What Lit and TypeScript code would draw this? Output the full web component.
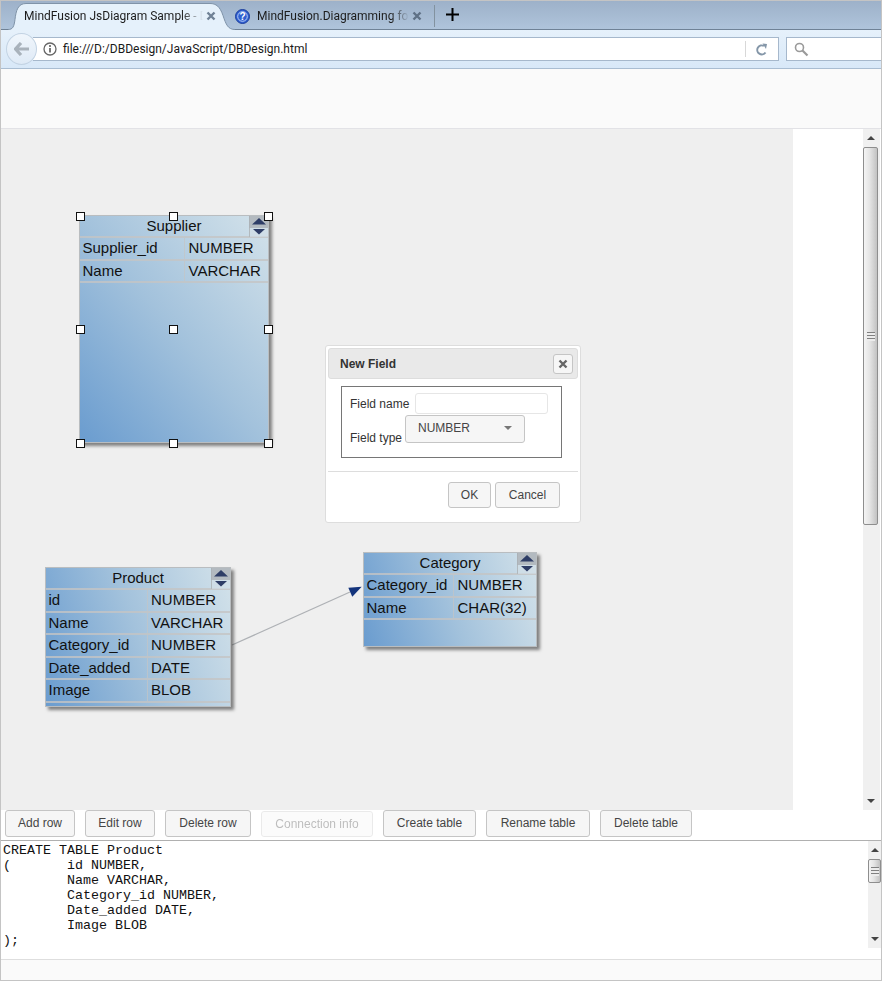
import {LitElement, html, css, svg} from 'lit';
import {customElement, property} from 'lit/decorators.js';

@customElement('db-table')
class DbTable extends LitElement {
  static styles = css`
    :host {
      position: absolute;
      display: block;
      box-sizing: border-box;
      border: 1px solid #b9bdc0;
      background: linear-gradient(to top right, #6a9ccf 0%, #a3c2dc 50%, #d3e2ea 100%);
      box-shadow: 3px 3px 3px rgba(40, 40, 40, 0.55);
      font: 15px/1 "Liberation Sans", Arial, sans-serif;
      color: #111;
    }
    :host([wide]) {
      background: linear-gradient(72deg, #6a9ccf 0%, #a3c2dc 50%, #d3e2ea 100%);
    }
    .head {
      position: relative;
      height: 20px;
      line-height: 20px;
      text-align: center;
      border-bottom: 2px solid rgba(196, 196, 196, 0.8);
    }
    .toggle {
      position: absolute;
      right: 0;
      top: 0;
      width: 19px;
      height: 21px;
      background: linear-gradient(#b3bac0 0 55%, rgba(210, 222, 230, 0.6) 55%);
      border-left: 1px solid rgba(170, 176, 180, 0.8);
      box-sizing: border-box;
    }
    .toggle svg {
      display: block;
    }
    .row {
      display: grid;
      height: 22.5px;
      line-height: 20.5px;
      box-sizing: border-box;
      border-bottom: 2px solid rgba(196, 196, 196, 0.8);
    }
    .row span {
      padding-left: 2.5px;
      white-space: nowrap;
    }
    .row span + span {
      padding-left: 3.5px;
      border-left: 1.5px solid rgba(196, 196, 196, 0.7);
    }
  `;

  @property() name = '';
  @property({type: Number}) split = 100;
  @property({attribute: false}) rows: string[][] = [];

  render() {
    return html`
      <div class="head">
        ${this.name}
        <div class="toggle">
          <svg width="18" height="21" viewBox="0 0 18 21">
            <path d="M2 8.5L9 2l7 6.5z" fill="#2e3d66" />
            <path d="M3 13h12l-6 5.5z" fill="#2e3d66" />
          </svg>
        </div>
      </div>
      ${this.rows.map(
        (r) => html`<div class="row" style="grid-template-columns:${this.split}px 1fr">
          <span>${r[0]}</span><span>${r[1]}</span>
        </div>`
      )}
    `;
  }
}

@customElement('app-root')
class AppRoot extends LitElement {
  static styles = css`
    :host {
      display: flex;
      flex-direction: column;
      width: 882px;
      height: 981px;
      box-sizing: border-box;
      overflow: hidden;
      background: #fff;
      border-left: 1px solid #c4c4c4;
      border-right: 1px solid #c4c4c4;
      border-top: 1px solid #c4c4c4;
      font-family: "Liberation Sans", Arial, sans-serif;
      font-size: 12px;
      color: #333;
    }
    /* browser chrome */
    .tabs {
      position: relative;
      display: flex;
      height: 29px;
      flex: none;
      box-sizing: border-box;
      padding-left: 23px;
      background: linear-gradient(#9db1c9, #afc4db);
      border-bottom: 1px solid #6f8296;
      font: 12px Roboto, sans-serif;
      color: #1c1c1c;
    }
    .tab-shape {
      position: absolute;
      left: 0;
      top: 0;
    }
    .tab {
      position: relative;
      display: flex;
      align-items: center;
      height: 30px;
      white-space: nowrap;
    }
    .tab .label {
      -webkit-mask-image: linear-gradient(to right, #000 88%, transparent);
      mask-image: linear-gradient(to right, #000 88%, transparent);
    }
    .tab.one { width: 192px; }
    .tab.one .label { width: 179px; }
    .tab.two { width: 194px; margin-left: 19px; }
    .tab.two .label { width: 152px; margin-left: 7px; }
    .tab .x { margin-left: 3px; flex: none; }
    .sep {
      width: 1px;
      height: 22px;
      margin: 4px 0 0 5px;
      background: #82929f;
    }
    .plus {
      margin: 6px 0 0 10px;
      flex: none;
    }
    .nav {
      display: flex;
      align-items: center;
      height: 39px;
      flex: none;
      box-sizing: border-box;
      background: linear-gradient(#e6f1fb, #d8e8f8);
      border-bottom: 1px solid #a9bdd2;
    }
    .back {
      width: 31px;
      height: 32px;
      margin-left: 5px;
      flex: none;
      z-index: 1;
      border: 1px solid #c3d3e3;
      border-radius: 50%;
      box-sizing: border-box;
      background: linear-gradient(#f0f6fc, #dfeaf6);
      display: flex;
      align-items: center;
      justify-content: center;
    }
    .url {
      display: flex;
      align-items: center;
      width: 746px;
      height: 24px;
      margin-left: -4px;
      box-sizing: border-box;
      background: #fff;
      border: 1px solid #a6b8cc;
      border-left: 0;
      font: 12px Roboto, sans-serif;
      color: #1a1a1a;
    }
    .url .info { margin-left: 10px; flex: none; }
    .url .addr { margin-left: 6px; flex: 1; }
    .url .div {
      width: 1px;
      height: 16px;
      background: #d8d8d8;
    }
    .url .reload { margin: 0 10px 0 9px; flex: none; }
    .search {
      flex: 1;
      height: 24px;
      margin-left: 7px;
      box-sizing: border-box;
      background: #fff;
      border: 1px solid #a6b8cc;
      border-right: 0;
      padding: 4px 0 0 7px;
    }
    .toolbar {
      height: 60px;
      flex: none;
      background: #fafafa;
      border-bottom: 1px solid #e2e2e6;
      box-sizing: border-box;
    }
    /* diagram */
    .work {
      display: flex;
      height: 681px;
      flex: none;
    }
    .canvas {
      position: relative;
      width: 792px;
      flex: none;
      background: #efefef;
    }
    .gap {
      width: 70px;
      flex: none;
    }
    .scroll {
      display: flex;
      flex-direction: column;
      flex: none;
      box-sizing: border-box;
      background: #f0f0f0;
    }
    .scroll.main {
      width: 17px;
    }
    .arrow {
      flex: none;
      display: flex;
      align-items: center;
      justify-content: center;
    }
    .main .arrow { height: 18px; width: 15px; }
    .thumb {
      flex: none;
      box-sizing: border-box;
      width: 100%;
      border: 1px solid #8e8e8e;
      border-radius: 2px;
      background: linear-gradient(to right, #f4f4f4, #e4e4e4 45%, #c2c2c2);
      display: flex;
      align-items: center;
      justify-content: center;
    }
    .main .thumb { height: 378px; width: 15px; }
    .track { flex: 1; }
    .grip {
      width: 8px;
      height: 9px;
      background: repeating-linear-gradient(#808080 0 1px, #ececec 1px 2px, #ececec 2px 3px);
    }
    .link {
      position: absolute;
      left: 0;
      top: 0;
      pointer-events: none;
    }
    .handle {
      position: absolute;
      width: 9px;
      height: 9px;
      box-sizing: border-box;
      background: #fff;
      border: 1px solid #111;
    }
    /* dialog */
    .dialog {
      position: absolute;
      left: 324px;
      top: 216px;
      width: 256px;
      height: 178px;
      box-sizing: border-box;
      padding: 2px;
      background: #fff;
      border: 1px solid #dddddd;
      border-radius: 3px;
      font-size: 12px;
      color: #333;
    }
    .title {
      display: flex;
      align-items: center;
      justify-content: space-between;
      height: 31px;
      box-sizing: border-box;
      padding: 0 4px 0 11px;
      background: #e9e9e9;
      border: 1px solid #dddddd;
      border-radius: 3px;
      font-weight: bold;
    }
    .close {
      width: 20px;
      height: 20px;
      box-sizing: border-box;
      background: #f6f6f6;
      border: 1px solid #c5c5c5;
      border-radius: 3px;
      display: flex;
      align-items: center;
      justify-content: center;
    }
    .close .x { margin: 0; }
    .group {
      width: 221px;
      height: 72px;
      margin: 7px 0 0 13px;
      box-sizing: border-box;
      border: 1px solid #767676;
      padding: 6px 0 0 8px;
    }
    .line {
      display: flex;
      align-items: center;
    }
    .line.name { gap: 6px; }
    .input {
      width: 133px;
      height: 21px;
      box-sizing: border-box;
      border: 1px solid #e6e6e6;
      border-radius: 3px;
      background: #fff;
    }
    .line.type {
      align-items: flex-end;
      gap: 3px;
      margin-top: 1px;
    }
    .line.type label { margin-bottom: -2px; }
    .select {
      display: flex;
      align-items: center;
      justify-content: space-between;
      width: 120px;
      height: 28px;
      box-sizing: border-box;
      padding: 0 12px 2px 12px;
      border: 1px solid #c5c5c5;
      border-radius: 3px;
      background: #f6f6f6;
      color: #454545;
    }
    .foot {
      display: flex;
      justify-content: flex-end;
      gap: 4px;
      height: 51px;
      margin-top: 13px;
      box-sizing: border-box;
      padding: 10px 18px 0 0;
      border-top: 1px solid #dddddd;
    }
    .btn {
      display: flex;
      align-items: center;
      justify-content: center;
      height: 26px;
      box-sizing: border-box;
      border: 1px solid #c5c5c5;
      border-radius: 3px;
      background: #f6f6f6;
      color: #454545;
      white-space: nowrap;
    }
    /* bottom part */
    .actions {
      display: flex;
      gap: 10px;
      height: 31px;
      flex: none;
      box-sizing: border-box;
      padding-left: 4px;
      border-bottom: 1px solid #b0b0b0;
    }
    .actions .btn {
      height: 27px;
      padding-bottom: 1px;
    }
    .actions .btn.off {
      opacity: 0.35;
      margin-top: 1px;
      height: 26px;
    }
    .sql {
      display: flex;
      height: 118px;
      flex: none;
    }
    .sql pre {
      flex: 1;
      margin: 0;
      padding: 2px 0 0 2px;
      font: 13.33px/15px "Liberation Mono", "Courier New", monospace;
      color: #111;
      tab-size: 8;
    }
    .scroll.small {
      width: 13px;
      height: 107px;
    }
    .small .arrow { height: 18px; }
    .small .thumb { height: 24px; }
    .status {
      flex: 1;
      background: #fafafa;
      border-top: 1px solid #dedede;
      border-bottom: 1px solid #c4c4c4;
    }
  `;

  private tables = [
    {
      name: 'Supplier', x: 78, y: 86, w: 190, h: 228, split: 104, wide: false,
      rows: [['Supplier_id', 'NUMBER'], ['Name', 'VARCHAR']],
    },
    {
      name: 'Product', x: 44, y: 438, w: 186, h: 140, split: 100.5, wide: true,
      rows: [
        ['id', 'NUMBER'], ['Name', 'VARCHAR'], ['Category_id', 'NUMBER'],
        ['Date_added', 'DATE'], ['Image', 'BLOB'],
      ],
    },
    {
      name: 'Category', x: 362, y: 423, w: 174, h: 95, split: 89, wide: true,
      rows: [['Category_id', 'NUMBER'], ['Name', 'CHAR(32)']],
    },
  ];

  // selection handles of the Supplier table, top-left corners in canvas pixels
  private handles = [
    [75, 83], [168, 83], [263, 83],
    [75, 196], [168, 196], [263, 196],
    [75, 310], [168, 310], [263, 310],
  ];

  private cross(color: string) {
    return html`<svg class="x" width="10" height="10" viewBox="0 0 10 10">
      <path d="M1.5 1.5l7 7M8.5 1.5l-7 7" stroke=${color} stroke-width="2.4" fill="none" />
    </svg>`;
  }

  private up() {
    return html`<svg width="8" height="4" viewBox="0 0 8 4"><path d="M0 4L4 0l4 4z" fill="#444" /></svg>`;
  }

  private down() {
    return html`<svg width="8" height="4" viewBox="0 0 8 4"><path d="M0 0h8L4 4z" fill="#444" /></svg>`;
  }

  private chrome() {
    return html`
      <div class="tabs">
        <svg class="tab-shape" width="240" height="29" viewBox="0 0 240 29">
          ${svg`<path d="M7 29v-.5c5 0 6-3 7-10 1-9 3-16 11-16h184c6 0 10 3 13 12 3 9 5 14 12 14v.5z"
            fill="#e5f1fb" stroke="none" />
          <path d="M7 28.5c5 0 6-3 7-10 1-9 3-16 11-16h184c6 0 10 3 13 12 3 9 5 14 12 14"
            fill="none" stroke="#7f93a8" />`}
        </svg>
        <div class="tab one">
          <span class="label">MindFusion JsDiagram Sample - D</span>
          ${this.cross('#6f8296')}
        </div>
        <div class="tab two">
          <svg width="15" height="15" viewBox="0 0 15 15" style="flex:none">
            <circle cx="7.5" cy="7.5" r="7" fill="#2f5fd0" stroke="#1d3f9c" />
            <circle cx="7.5" cy="7.5" r="4.8" fill="none" stroke="#b9cdf5" />
            <text x="7.5" y="11" text-anchor="middle" font-family="Liberation Sans" font-size="10" font-weight="bold" fill="#fff">?</text>
          </svg>
          <span class="label">MindFusion.Diagramming fo</span>
          ${this.cross('#5f7186')}
        </div>
        <div class="sep"></div>
        <svg class="plus" width="15" height="15" viewBox="0 0 15 15">
          <path d="M7.5 1v13M1 7.5h13" stroke="#000" stroke-width="2" />
        </svg>
      </div>
      <div class="nav">
        <div class="back">
          <svg width="16" height="14" viewBox="0 0 16 14">
            <path d="M7 1L1.5 7 7 13M2 7h13" fill="none" stroke="#a9b2bb" stroke-width="3.2" />
          </svg>
        </div>
        <div class="url">
          <svg class="info" width="14" height="14" viewBox="0 0 14 14">
            <circle cx="7" cy="7" r="6" fill="none" stroke="#666" stroke-width="1.3" />
            <path d="M7 6v4.5" stroke="#555" stroke-width="1.6" />
            <circle cx="7" cy="4" r="1" fill="#555" />
          </svg>
          <span class="addr">file:///D:/DBDesign/JavaScript/DBDesign.html</span>
          <span class="div"></span>
          <svg class="reload" width="13" height="13" viewBox="0 0 13 13">
            <path d="M10.5 9.5A4.5 4.5 0 1 1 9 3" fill="none" stroke="#8496a8" stroke-width="2" />
            <path d="M7.5 0.5L12 1l-1 5z" fill="#8496a8" />
          </svg>
        </div>
        <div class="search">
          <svg width="15" height="15" viewBox="0 0 15 15">
            <circle cx="5.5" cy="5.5" r="4" fill="none" stroke="#9a9a9a" stroke-width="1.6" />
            <path d="M8.5 8.5L13.5 13.5" stroke="#9a9a9a" stroke-width="2.2" />
          </svg>
        </div>
      </div>
      <div class="toolbar"></div>
    `;
  }

  private dialog() {
    return html`
      <div class="dialog">
        <div class="title">
          New Field
          <div class="close">${this.cross('#666')}</div>
        </div>
        <div class="group">
          <div class="line name">
            <label>Field name</label>
            <div class="input"></div>
          </div>
          <div class="line type">
            <label>Field type</label>
            <div class="select">
              NUMBER
              <svg width="8" height="4" viewBox="0 0 8 4"><path d="M0 0h8L4 4z" fill="#777" /></svg>
            </div>
          </div>
        </div>
        <div class="foot">
          <div class="btn" style="width:43px">OK</div>
          <div class="btn" style="width:65px">Cancel</div>
        </div>
      </div>
    `;
  }

  render() {
    return html`
      ${this.chrome()}
      <div class="work">
        <div class="canvas">
          <svg class="link" width="792" height="681" viewBox="0 0 792 681">
            <path d="M231 516L349 463" stroke="#aeb1b5" stroke-width="1.3" />
            <path d="M347.3 458.7L360.7 457.7 351.3 467.7z" fill="#14347c" />
          </svg>
          ${this.tables.map(
            (t) => html`<db-table
              ?wide=${t.wide}
              style="left:${t.x}px;top:${t.y}px;width:${t.w}px;height:${t.h}px"
              .name=${t.name}
              .split=${t.split}
              .rows=${t.rows}
            ></db-table>`
          )}
          ${this.handles.map(
            (h) => html`<div class="handle" style="left:${h[0]}px;top:${h[1]}px"></div>`
          )}
          ${this.dialog()}
        </div>
        <div class="gap"></div>
        <div class="scroll main">
          <div class="arrow">${this.up()}</div>
          <div class="thumb"><div class="grip"></div></div>
          <div class="track"></div>
          <div class="arrow">${this.down()}</div>
        </div>
      </div>
      <div class="actions">
        <div class="btn" style="width:70px">Add row</div>
        <div class="btn" style="width:70px">Edit row</div>
        <div class="btn" style="width:86px">Delete row</div>
        <div class="btn off" style="width:112px">Connection info</div>
        <div class="btn" style="width:93px">Create table</div>
        <div class="btn" style="width:104px">Rename table</div>
        <div class="btn" style="width:92px">Delete table</div>
      </div>
      <div class="sql">
        <pre>CREATE TABLE Product
(&#9;id NUMBER,
&#9;Name VARCHAR,
&#9;Category_id NUMBER,
&#9;Date_added DATE,
&#9;Image BLOB
);</pre>
        <div class="scroll small">
          <div class="arrow">${this.up()}</div>
          <div class="thumb"><div class="grip"></div></div>
          <div class="track"></div>
          <div class="arrow">${this.down()}</div>
        </div>
      </div>
      <div class="status"></div>
    `;
  }
}
